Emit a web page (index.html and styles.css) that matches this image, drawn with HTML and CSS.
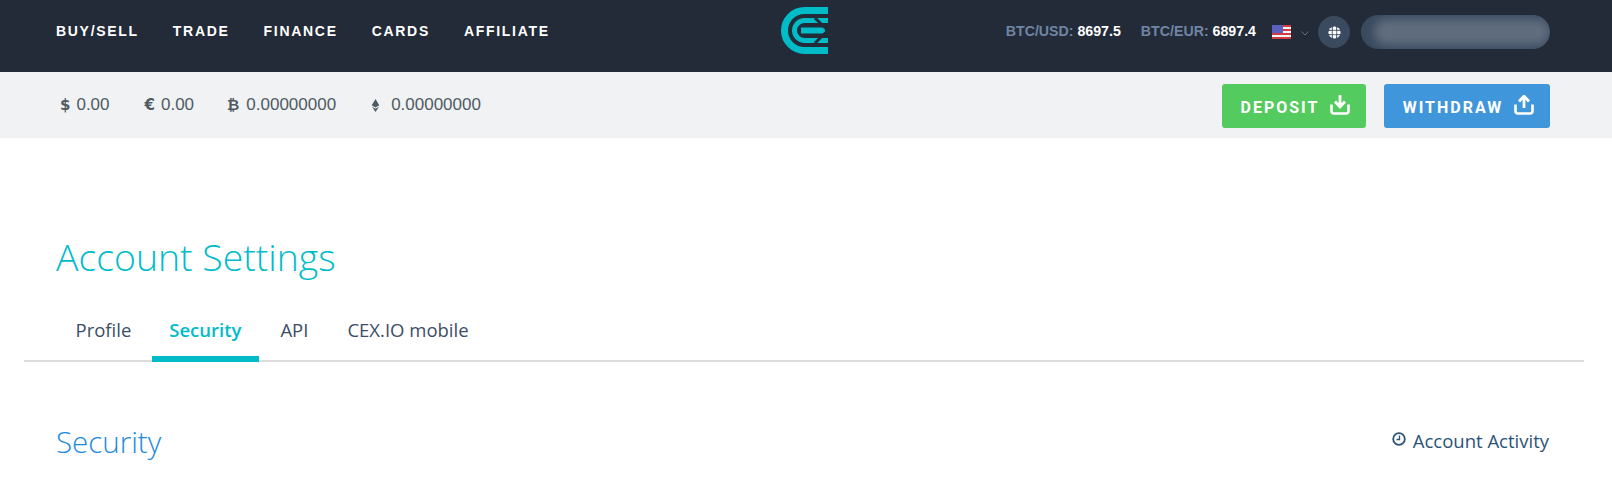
FILE: index.html
```html
<!DOCTYPE html>
<html lang="en">
<head>
    <meta charset="UTF-8">
    <meta name="viewport" content="width=device-width, initial-scale=1.0">
    <title>Account Settings</title>
    <link rel="stylesheet" href="styles.css">
</head>
<body>
    <header class="top-bar">
        <nav class="main-nav">
            <a>BUY/SELL</a>
            <a>TRADE</a>
            <a>FINANCE</a>
            <a>CARDS</a>
            <a>AFFILIATE</a>
        </nav>
        <svg class="logo" viewBox="0 0 47 47" width="47" height="47">
            <path d="M47 3.500H23.500a20 20 0 0 0 0 40H47" fill="none" stroke="#00bcc9" stroke-width="7"/>
            <path d="M47 13.500H23.500a10 10 0 0 0 0 20H47" fill="none" stroke="#00bcc9" stroke-width="5"/>
            <path d="M20 23.500H41l3 0" stroke="#00bcc9" stroke-width="6"/>
            <path d="M34 11l13 12.500-13 12.500" fill="none" stroke="#232b38" stroke-width="3"/>
        </svg>
        <div class="top-right">
            <div class="ticker"><span>BTC/USD:</span> <b>8697.5</b></div>
            <div class="ticker"><span>BTC/EUR:</span> <b>6897.4</b></div>
            <svg class="flag" viewBox="0 0 19 14" width="19" height="14">
                <rect width="19" height="14" fill="#f4f4f4"/>
                <path d="M0 1h19M0 5h19M0 9h19M0 13h19" stroke="#d23a44" stroke-width="2"/>
                <rect width="11" height="8" fill="#5a5fc0"/>
            </svg>
            <svg class="chevron" viewBox="0 0 8 5" width="8" height="5">
                <path d="M.5.5L4 4 7.500.5" fill="none" stroke="#5d6e85"/>
            </svg>
            <div class="help">
                <svg viewBox="0 0 12 12" width="13" height="13">
                    <circle cx="6" cy="6" r="5.600" fill="#fff"/>
                    <path d="M4 0v12M8 0v12M0 4h12M0 8h12" stroke="#3a4a5f" stroke-width=".9"/>
                    <rect x="4.400" y="4.400" width="3.200" height="3.200" fill="#fff"/>
                </svg>
            </div>
            <div class="user-pill"><div class="user-blur"></div></div>
        </div>
    </header>

    <div class="balance-bar">
        <div class="balances">
            <div class="balance"><span class="cur">$</span>0.00</div>
            <div class="balance"><span class="cur">€</span>0.00</div>
            <div class="balance"><span class="cur cur-btc">₿</span>0.00000000</div>
            <div class="balance">
                <svg class="eth" viewBox="0 0 8 12" width="9" height="13">
                    <path d="M4 0l3.500 5.800L4 7.800.5 5.800zM.8 7.200L4 9.100l3.200-1.900L4 12z" fill="#4f5b62"/>
                </svg>0.00000000
            </div>
        </div>
        <div class="actions">
            <a class="btn btn-deposit">DEPOSIT
                <svg viewBox="0 0 20 20" width="20" height="20">
                    <path d="M1.500 9.500v6.500a2.500 2.500 0 0 0 2.500 2.500h12a2.500 2.500 0 0 0 2.500-2.500V9.500" fill="none" stroke="#fff" stroke-width="2.600"/>
                    <path d="M10 0v10M5 6.500l5 5.500 5-5.500" fill="none" stroke="#fff" stroke-width="2.800"/>
                </svg>
            </a>
            <a class="btn btn-withdraw">WITHDRAW
                <svg viewBox="0 0 20 20" width="20" height="20">
                    <path d="M1.500 9.500v6.500a2.500 2.500 0 0 0 2.500 2.500h12a2.500 2.500 0 0 0 2.500-2.500V9.500" fill="none" stroke="#fff" stroke-width="2.600"/>
                    <path d="M10 13V2M5 6.500L10 1l5 5.500" fill="none" stroke="#fff" stroke-width="2.800"/>
                </svg>
            </a>
        </div>
    </div>

    <main class="content">
        <h1>Account Settings</h1>
        <ul class="tabs">
            <li>Profile</li>
            <li class="active">Security</li>
            <li>API</li>
            <li>CEX.IO mobile</li>
        </ul>
        <div class="section-head">
            <h2>Security</h2>
            <a class="activity">
                <svg viewBox="0 0 14 14" width="14" height="14">
                    <circle cx="7" cy="7" r="5.800" fill="none" stroke="#2c5378" stroke-width="1.800"/>
                    <path d="M7.500 3.500v4H4.500" fill="none" stroke="#2c5378" stroke-width="1.300"/>
                </svg>
                Account Activity
            </a>
        </div>
    </main>
</body>
</html>
```

FILE: styles.css
```css
html, body {
    margin: 0;
    padding: 0;
    background: #fff;
}
body {
    height: 478px;
    overflow: hidden;
    font-family: "Open Sans", sans-serif;
}
a { display: block; }

.top-bar {
    height: 72px;
    background: #232b38;
    display: flex;
    align-items: center;
    justify-content: space-between;
    padding: 0 62px 8px 56px;
    box-sizing: border-box;
    position: relative;
}
.main-nav {
    display: flex;
    gap: 34px;
    margin-top: -3px;
    font-family: "Liberation Sans", sans-serif;
    font-weight: bold;
    font-size: 14px;
    letter-spacing: 1.700px;
    color: #fff;
}
.logo {
    position: absolute;
    left: 781px;
    top: 7px;
}
.top-right {
    display: flex;
    align-items: center;
    font-family: "Liberation Sans", sans-serif;
    font-size: 14.200px;
    font-weight: bold;
}
.ticker { margin-right: 20px; margin-top: -2px; color: #fff; }
.ticker span { color: #6f85a3; }
.flag { margin-left: -4px; }
.chevron { margin: 2px 9px 0 10px; }
.help {
    width: 32px;
    height: 32px;
    border-radius: 50%;
    background: #3a4a5f;
    display: flex;
    align-items: center;
    justify-content: center;
}
.user-pill {
    width: 189px;
    height: 34px;
    margin-left: 11px;
    border-radius: 17px;
    background: #3a4a5f;
    overflow: hidden;
    display: flex;
    align-items: center;
    justify-content: flex-end;
}
.user-blur {
    width: 176px;
    height: 26px;
    border-radius: 13px;
    background: #606d7e;
    filter: blur(5px);
}

.balance-bar {
    height: 66px;
    background: #f0f2f4;
    display: flex;
    align-items: center;
    justify-content: space-between;
    padding: 0 62px 0 60px;
    box-sizing: border-box;
}
.balances {
    display: flex;
    gap: 35px;
    font-family: "Liberation Sans", sans-serif;
    font-size: 17px;
    color: #4f5b62;
}
.balance { display: flex; align-items: center; }
.cur { font-weight: bold; margin-right: 6px; font-family: "DejaVu Sans", sans-serif; font-size: 15px; }
.cur-btc { margin-left: -2px; margin-right: 7px; }
.eth { margin-right: 11px; }
.actions { display: flex; gap: 18px; padding-top: 2px; }
.btn {
    height: 44px;
    display: flex;
    align-items: center;
    justify-content: center;
    gap: 11px;
    padding: 2px 0 0 3px;
    border-radius: 3px;
    color: #fff;
    font-family: "Roboto", sans-serif;
    font-weight: bold;
    font-size: 16px;
    letter-spacing: 2px;
    box-sizing: border-box;
}
.btn svg { margin-top: -5px; }
.btn-deposit { width: 144px; background: #54cb5e; }
.btn-withdraw { width: 166px; background: #4096db; }

.content { padding: 0 28px 0 24px; }
h1 {
    margin: 0;
    padding: 93px 0 0 32px;
    font-weight: 300;
    font-size: 37.400px;
    line-height: 52px;
    color: #00bcc9;
}
.tabs {
    list-style: none;
    margin: 30px 0 0;
    padding: 0 0 0 32px;
    display: flex;
    height: 47px;
    border-bottom: 2px solid #ddd;
    font-size: 18.500px;
    color: #3c4d68;
}
.tabs li {
    padding: 0 19.500px;
    line-height: 34px;
    height: 49px;
    box-sizing: border-box;
}
.tabs .active {
    margin: 0 2px 0 1px;
    padding: 0 17.500px;
    color: #00bcc9;
    font-weight: 600;
    border-bottom: 6px solid #00bcc9;
    border-radius: 3px 3px 0 0;
}
.section-head {
    display: flex;
    justify-content: space-between;
    padding: 60px 35px 0 32px;
}
h2 {
    margin: 0;
    font-weight: 300;
    font-size: 29.500px;
    line-height: 40px;
    color: #2189e0;
}
.activity {
    display: flex;
    align-items: center;
    gap: 7px;
    font-size: 18.500px;
    color: #2c5378;
    height: 36px;
}
.activity svg { margin-top: -3px; }
```
